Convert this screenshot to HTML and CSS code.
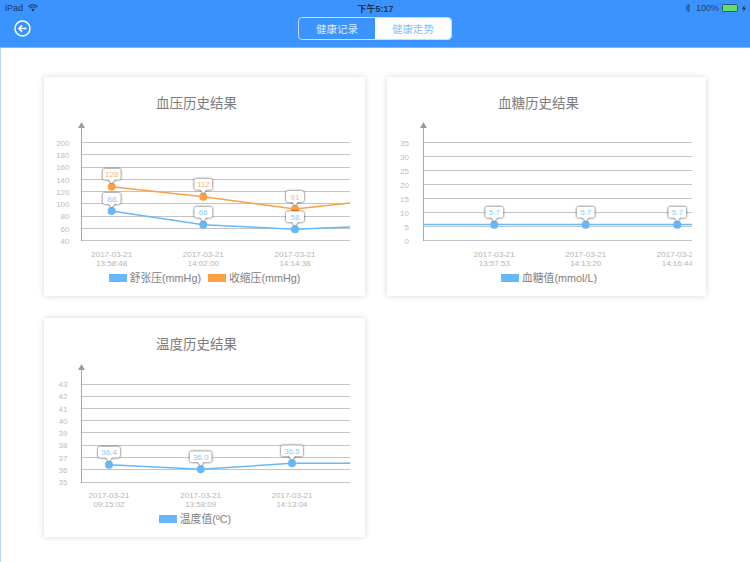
FILE: index.html
```html
<!DOCTYPE html>
<html lang="zh-CN">
<head>
  <meta charset="UTF-8">
  <meta name="viewport" content="width=device-width, initial-scale=1.0">
  <title>健康走势</title>
  <link rel="stylesheet" href="styles.css">
</head>
<body>

  <header class="header">
    <div class="status-bar">
      <div class="status-left">
        <span>iPad</span>
        <svg width="10" height="8" viewBox="0 0 10 8"><path d="M0.3 2.6a6.8 6.8 0 0 1 9.4 0M1.900 4.200a4.500 4.500 0 0 1 6.200 0" fill="none" stroke="#1d3557" stroke-width="1.100"/><path d="M3.300 5.600a2.500 2.500 0 0 1 3.400 0L5 7.500z" fill="#1d3557"/></svg>
      </div>
      <div class="status-time">下午5:17</div>
      <div class="status-right">
        <svg width="6" height="10" viewBox="0 0 6 10"><path d="M0.500 2.800L5 6.900 3 9V1l2 2.100L0.500 7.200" fill="none" stroke="#2f4f7f" stroke-width="1"/></svg>
        <span>100%</span>
        <div class="battery"><div class="battery-fill"></div></div>
        <svg width="4" height="7" viewBox="0 0 4 7"><path d="M2.400 0L0 4h1.600L1.200 7 4 2.800H2.200z" fill="#1d3557"/></svg>
      </div>
    </div>
    <div class="nav-bar">
      <svg class="back" width="17" height="17" viewBox="0 0 17 17"><circle cx="8.500" cy="8.500" r="7.500" fill="none" stroke="#fff" stroke-width="1.500"/><path d="M12.500 8.500H5M8 5.400L4.900 8.500 8 11.600" fill="none" stroke="#fff" stroke-width="1.500"/></svg>
      <div class="segment">
        <div class="segment-item">健康记录</div>
        <div class="segment-item active">健康走势</div>
      </div>
    </div>
  </header>

  <main class="charts">

    <section class="card">
      <h2>血压历史结果</h2>
      <svg class="chart" width="306" height="152" viewBox="0 0 306 152">
        <defs>
          <path id="tip" d="M-7-18H7a2 2 0 0 1 2 2V-9a2 2 0 0 1-2 2H3L0-3.500-3-7H-7a2 2 0 0 1-2-2V-16a2 2 0 0 1 2-2z"/>
          <path id="tip-wide" d="M-9-18H9a2 2 0 0 1 2 2V-9a2 2 0 0 1-2 2H3L0-3.500-3-7H-9a2 2 0 0 1-2-2V-16a2 2 0 0 1 2-2z"/>
        </defs>
        <g class="grid">
          <path d="M38 24.500H306M38 36.500H306M38 49.500H306M38 61.500H306M38 73.500H306M38 85.500H306M38 98.500H306M38 110.500H306M38 122.500H306"/>
        </g>
        <path class="axis" d="M37.500 9V123"/>
        <path class="arrow" d="M37.500 4L41 10H34z"/>
        <g class="y-labels">
          <text x="25.500" y="27.500">200</text>
          <text x="25.500" y="39.500">180</text>
          <text x="25.500" y="52">160</text>
          <text x="25.500" y="64.500">140</text>
          <text x="25.500" y="76.500">120</text>
          <text x="25.500" y="89">100</text>
          <text x="25.500" y="101">80</text>
          <text x="25.500" y="113.500">60</text>
          <text x="25.500" y="125.500">40</text>
        </g>
        <g class="x-labels">
          <text x="67.700" y="138.500">2017-03-21</text><text x="67.700" y="147.500">13:58:48</text>
          <text x="159.300" y="138.500">2017-03-21</text><text x="159.300" y="147.500">14:02:00</text>
          <text x="251" y="138.500">2017-03-21</text><text x="251" y="147.500">14:14:38</text>
        </g>
        <polyline class="line orange" points="67.700,68.700 159.300,78.700 251,91 306,85"/>
        <polyline class="line blue" points="67.700,93 159.300,106.700 251,111.300 306,109"/>
        <g class="dots orange">
          <circle cx="67.700" cy="68.700" r="4"/><circle cx="159.300" cy="78.700" r="4"/><circle cx="251" cy="91" r="4"/>
        </g>
        <g class="dots blue">
          <circle cx="67.700" cy="93" r="4"/><circle cx="159.300" cy="106.700" r="4"/><circle cx="251" cy="111.300" r="4"/>
        </g>
        <g class="tips orange">
          <g transform="translate(67.700 68.700)"><use href="#tip"/><text y="-9.500">128</text></g>
          <g transform="translate(159.300 78.700)"><use href="#tip"/><text y="-9.500">112</text></g>
          <g transform="translate(251 91)"><use href="#tip"/><text y="-9.500">91</text></g>
        </g>
        <g class="tips blue">
          <g transform="translate(67.700 93)"><use href="#tip"/><text y="-9.500">88</text></g>
          <g transform="translate(159.300 106.700)"><use href="#tip"/><text y="-9.500">66</text></g>
          <g transform="translate(251 111.300)"><use href="#tip"/><text y="-9.500">58</text></g>
        </g>
      </svg>
      <div class="legend">
        <div class="legend-item"><span class="swatch blue-bg"></span>舒张压(mmHg)</div>
        <div class="legend-item"><span class="swatch orange-bg"></span>收缩压(mmHg)</div>
      </div>
    </section>

    <section class="card">
      <h2>血糖历史结果</h2>
      <svg class="chart" width="305" height="152" viewBox="0 0 305 152">
        <g class="grid">
          <path d="M37 24.500H305M37 38.500H305M37 52.500H305M37 66.500H305M37 80.500H305M37 94.500H305M37 108.500H305M37 122.500H305"/>
        </g>
        <path class="axis" d="M36.500 9V123"/>
        <path class="arrow" d="M36.500 4L40 10H33z"/>
        <g class="y-labels">
          <text x="22" y="27.500">35</text>
          <text x="22" y="41.500">30</text>
          <text x="22" y="55.500">25</text>
          <text x="22" y="69.500">20</text>
          <text x="22" y="83.500">15</text>
          <text x="22" y="97.500">10</text>
          <text x="22" y="111.500">5</text>
          <text x="22" y="125.500">0</text>
        </g>
        <g class="x-labels">
          <text x="107.300" y="138.500">2017-03-21</text><text x="107.300" y="147.500">13:57:53</text>
          <text x="198.700" y="138.500">2017-03-21</text><text x="198.700" y="147.500">14:13:20</text>
          <text x="290.300" y="138.500">2017-03-21</text><text x="290.300" y="147.500">14:16:44</text>
        </g>
        <polyline class="line blue" points="37,106.500 305,106.500"/>
        <g class="dots blue">
          <circle cx="107.300" cy="106.700" r="4"/><circle cx="198.700" cy="106.700" r="4"/><circle cx="290.300" cy="106.700" r="4"/>
        </g>
        <g class="tips blue">
          <g transform="translate(107.300 106.700)"><use href="#tip"/><text y="-9.500">5.7</text></g>
          <g transform="translate(198.700 106.700)"><use href="#tip"/><text y="-9.500">5.7</text></g>
          <g transform="translate(290.300 106.700)"><use href="#tip"/><text y="-9.500">5.7</text></g>
        </g>
      </svg>
      <div class="legend legend-sugar">
        <div class="legend-item"><span class="swatch blue-bg"></span>血糖值(mmol/L)</div>
      </div>
    </section>

    <section class="card">
      <h2>温度历史结果</h2>
      <svg class="chart" width="306" height="152" viewBox="0 0 306 152">
        <g class="grid">
          <path d="M38 25.500H306M38 37.500H306M38 49.500H306M38 61.500H306M38 73.500H306M38 86.500H306M38 98.500H306M38 110.500H306M38 123.500H306"/>
        </g>
        <path class="axis" d="M37.500 10V124"/>
        <path class="arrow" d="M37.500 5L41 11H34z"/>
        <g class="y-labels">
          <text x="23.500" y="28">43</text>
          <text x="23.500" y="40">42</text>
          <text x="23.500" y="52.500">41</text>
          <text x="23.500" y="64.500">40</text>
          <text x="23.500" y="77">39</text>
          <text x="23.500" y="89">38</text>
          <text x="23.500" y="101.500">37</text>
          <text x="23.500" y="114">36</text>
          <text x="23.500" y="126">35</text>
        </g>
        <g class="x-labels">
          <text x="65" y="139">2017-03-21</text><text x="65" y="148">09:15:02</text>
          <text x="156.700" y="139">2017-03-21</text><text x="156.700" y="148">13:58:09</text>
          <text x="248" y="139">2017-03-21</text><text x="248" y="148">14:13:04</text>
        </g>
        <polyline class="line blue" points="65,105.700 156.700,110.300 248,104.300 306,104.300"/>
        <g class="dots blue">
          <circle cx="65" cy="105.700" r="4"/><circle cx="156.700" cy="110.300" r="4"/><circle cx="248" cy="104.300" r="4"/>
        </g>
        <g class="tips blue">
          <g transform="translate(65 105.700)"><use href="#tip-wide"/><text y="-9.500">36.4</text></g>
          <g transform="translate(156.700 110.300)"><use href="#tip-wide"/><text y="-9.500">36.0</text></g>
          <g transform="translate(248 104.300)"><use href="#tip-wide"/><text y="-9.500">36.5</text></g>
        </g>
      </svg>
      <div class="legend legend-temp">
        <div class="legend-item"><span class="swatch blue-bg"></span>温度值(ºC)</div>
      </div>
    </section>

  </main>

</body>
</html>
```

FILE: styles.css
```css
body {
  font-family: "Liberation Sans", "Noto Sans CJK SC", sans-serif;
  margin: 0;
  height: 562px;
  overflow: hidden;
  background-color: #ffffff;
}
.header {
  height: 47px;
  background-color: #3b93fd;
  border-bottom: 1px solid #7db6fb;
}
.status-bar {
  display: flex;
  justify-content: space-between;
  align-items: center;
  height: 16px;
  padding: 0 4px 0 5px;
  font-size: 9px;
  color: #1d3557;
}
.status-left, .status-right {
  flex: 1;
  display: flex;
  align-items: center;
  gap: 5px;
}
.status-right {
  justify-content: flex-end;
  gap: 3px;
}
.status-right span {
  margin: 0 0 0 2px;
  color: #24416b;
}
.status-time {
  font-weight: bold;
}
.battery {
  width: 16px;
  height: 8px;
  box-sizing: border-box;
  border: 1px solid #2b5a6b;
  border-radius: 2px;
  margin-right: 1px;
}
.battery-fill {
  height: 100%;
  background-color: #5fe06b;
}
.nav-bar {
  display: grid;
  grid-template-columns: 1fr auto 1fr;
  align-items: center;
  height: 23px;
  margin-top: 1px;
}
.back {
  margin-left: 14px;
}
.segment {
  display: flex;
  width: 154px;
  height: 23px;
  box-sizing: border-box;
  border: 1px solid #c5defc;
  border-radius: 4px;
  overflow: hidden;
  font-size: 10.500px;
}
.segment-item {
  flex: 1;
  display: flex;
  justify-content: center;
  align-items: center;
  color: #dcebfe;
}
.segment-item.active {
  background-color: #ffffff;
  color: #8dbefa;
}
.charts {
  display: grid;
  grid-template-columns: 321px 319px;
  grid-auto-rows: 219px;
  gap: 22px;
  padding: 29px 0 0 43px;
  border-left: 1px solid #b9d8fd;
  height: 514px;
  box-sizing: border-box;
}
.card {
  background-color: #ffffff;
  box-shadow: 0px 0px 6px rgba(0, 0, 0, 0.16);
}
h2 {
  margin: 0;
  padding: 18px 16px 5px 0;
  height: 18px;
  line-height: 18px;
  font-size: 13.500px;
  font-weight: normal;
  text-align: center;
  color: #7d7d7d;
}
.chart {
  display: block;
}
.grid path {
  fill: none;
  stroke: #c4c4c8;
  stroke-width: 1;
}
.axis {
  fill: none;
  stroke: #a8a8a8;
  stroke-width: 1;
}
.arrow {
  fill: #9c9c9c;
}
.y-labels text {
  font-size: 8px;
  fill: #bdbdbd;
  text-anchor: end;
}
.x-labels text {
  font-size: 8px;
  fill: #b5b5b5;
  text-anchor: middle;
}
.line {
  fill: none;
  stroke-width: 1.500;
}
.line.blue {
  stroke: #66b8fb;
}
.line.orange {
  stroke: #fba045;
}
.dots.blue {
  fill: #66b8fb;
}
.dots.orange {
  fill: #fba045;
}
.tips use {
  fill: #ffffff;
  filter: drop-shadow(0px 0.500px 1px rgba(0, 0, 0, 0.85));
}
.tips text {
  font-size: 8px;
  text-anchor: middle;
}
.tips.blue text {
  fill: #8ccafb;
}
.tips.orange text {
  fill: #fbb777;
}
.legend {
  display: flex;
  justify-content: center;
  gap: 7px;
  margin-top: 1px;
  line-height: 14px;
  font-size: 10.800px;
  color: #808080;
}
.legend-sugar {
  padding-left: 5px;
}
.legend-temp {
  padding-right: 19px;
}
.legend-item {
  display: flex;
  align-items: center;
  gap: 3px;
}
.swatch {
  width: 18px;
  height: 8px;
}
.blue-bg {
  background-color: #66b8fb;
}
.orange-bg {
  background-color: #fba045;
}
```
